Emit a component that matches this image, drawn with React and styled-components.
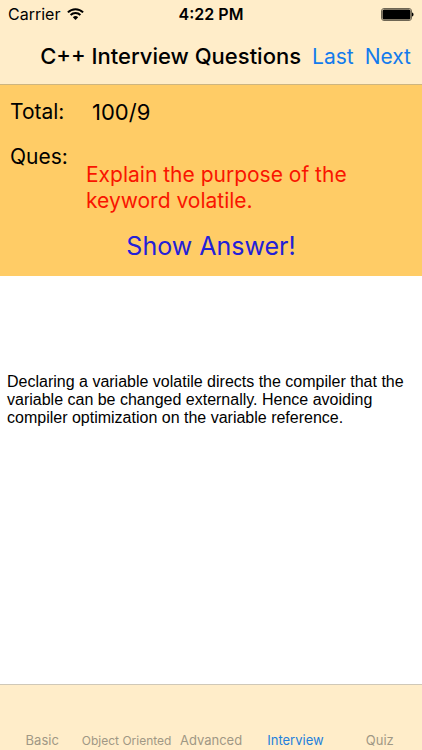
import React from "react";
import styled, { createGlobalStyle } from "styled-components";

const tabs = ["Basic", "Object Oriented", "Advanced", "Interview", "Quiz"];

const App = () => {
  return (
    <Page>
      <GlobalStyle />
      <Header>
        <StatusBar>
          <Carrier>
            Carrier
            <WifiIcon />
          </Carrier>
          <Time>4:22 PM</Time>
          <BatteryIcon />
        </StatusBar>
        <NavBar>
          <Title>C++ Interview Questions</Title>
          <NavButton type="button">Last</NavButton>
          <NavButton type="button">Next</NavButton>
        </NavBar>
      </Header>
      <Question>
        <Label>Total:</Label>
        <Count>100/9</Count>
        <Label>Ques:</Label>
        <QuestionText>Explain the purpose of the keyword volatile.</QuestionText>
        <ShowButton type="button">Show Answer!</ShowButton>
      </Question>
      <Answer>
        <AnswerText>
          Declaring a variable volatile directs the compiler that the variable
          can be changed externally. Hence avoiding compiler optimization on the
          variable reference.
        </AnswerText>
      </Answer>
      <TabBar>
        {tabs.map((tab) => (
          <Tab
            key={tab}
            href="#"
            $active={tab === "Interview"}
            $long={tab.length > 12}
          >
            {tab}
          </Tab>
        ))}
      </TabBar>
    </Page>
  );
};

export default App;

const WifiIcon = () => (
  <svg width="17" height="12" viewBox="0 0 17 12" fill="none" stroke="#000" strokeWidth="2">
    <path d="M0.9 4.4A10.6 10.6 0 0 1 16.1 4.4" />
    <path d="M3.6 7A7 7 0 0 1 13.4 7" />
    <path d="M8.5 12L5.8 9.2A4 4 0 0 1 11.2 9.2Z" fill="#000" stroke="none" />
  </svg>
);

const BatteryIcon = () => (
  <Battery width="33" height="13" viewBox="0 0 33 13">
    <rect x="0.5" y="0.5" width="30" height="12" rx="2.5" fill="none" stroke="#6e6654" />
    <rect x="1.5" y="1.5" width="28" height="10" rx="1.5" fill="#000" />
    <path d="M31 4.5C33 5 33 8 31 8.5Z" fill="#000" />
  </Battery>
);

const GlobalStyle = createGlobalStyle`
  * {
    box-sizing: border-box;
  }
  body {
    margin: 0;
    background-color: white;
    color: black;
    font-family: Inter, "Liberation Sans", sans-serif;
  }
  button {
    padding: 0;
    border: none;
    background: none;
    font-family: inherit;
    cursor: pointer;
  }
`;
const Page = styled.div`
  display: flex;
  flex-direction: column;
  min-height: 100vh;
`;
const Header = styled.header`
  background-color: #ffedc9;
  border-bottom: 1px solid #cdb580;
`;
const StatusBar = styled.div`
  display: grid;
  grid-template-columns: 1fr auto 1fr;
  align-items: center;
  height: 28px;
  padding: 0 8px;
`;
const Carrier = styled.div`
  display: flex;
  align-items: center;
  gap: 7px;
  font-size: 16px;
`;
const Time = styled.div`
  font-size: 16px;
  font-weight: 600;
`;
const Battery = styled.svg`
  justify-self: end;
`;
const NavBar = styled.nav`
  display: flex;
  align-items: center;
  justify-content: flex-end;
  gap: 11px;
  height: 56px;
  padding: 0 11px;
`;
const Title = styled.h1`
  margin: 0;
  font-size: 22px;
  font-weight: 500;
  white-space: nowrap;
`;
const NavButton = styled.button`
  color: #147bec;
  font-size: 21px;
`;
const Question = styled.section`
  display: grid;
  grid-template-columns: 76px 1fr;
  padding: 8px 10px 13px;
  background-color: #ffcc66;
`;
const Label = styled.div`
  height: 45px;
  font-size: 21px;
  line-height: 38px;
`;
const Count = styled.div`
  padding-left: 6px;
  font-size: 22px;
  line-height: 38px;
`;
const QuestionText = styled.p`
  margin: 0;
  padding: 24px 40px 15px 0;
  color: #f91500;
  font-size: 21px;
  line-height: 26px;
`;
const ShowButton = styled.button`
  grid-column: 1 / -1;
  justify-self: center;
  color: #2320d8;
  font-size: 25px;
  line-height: 34px;
`;
const Answer = styled.main`
  flex: 1;
  padding: 97px 7px 0;
`;
const AnswerText = styled.p`
  margin: 0;
  font-family: "Liberation Sans", Arial, sans-serif;
  font-size: 16px;
  line-height: 18px;
`;
const TabBar = styled.nav`
  display: flex;
  height: 66px;
  background-color: #ffedc9;
  border-top: 1px solid #cfc8b8;
`;
const Tab = styled.a`
  display: flex;
  flex: 1 1 0;
  justify-content: center;
  min-width: 0;
  padding-top: 46px;
  color: ${(props) => (props.$active ? "#2480dc" : "#9f9885")};
  font-size: ${(props) => (props.$long ? "12px" : "13px")};
  line-height: 19px;
  text-decoration: none;
  white-space: nowrap;
`;
